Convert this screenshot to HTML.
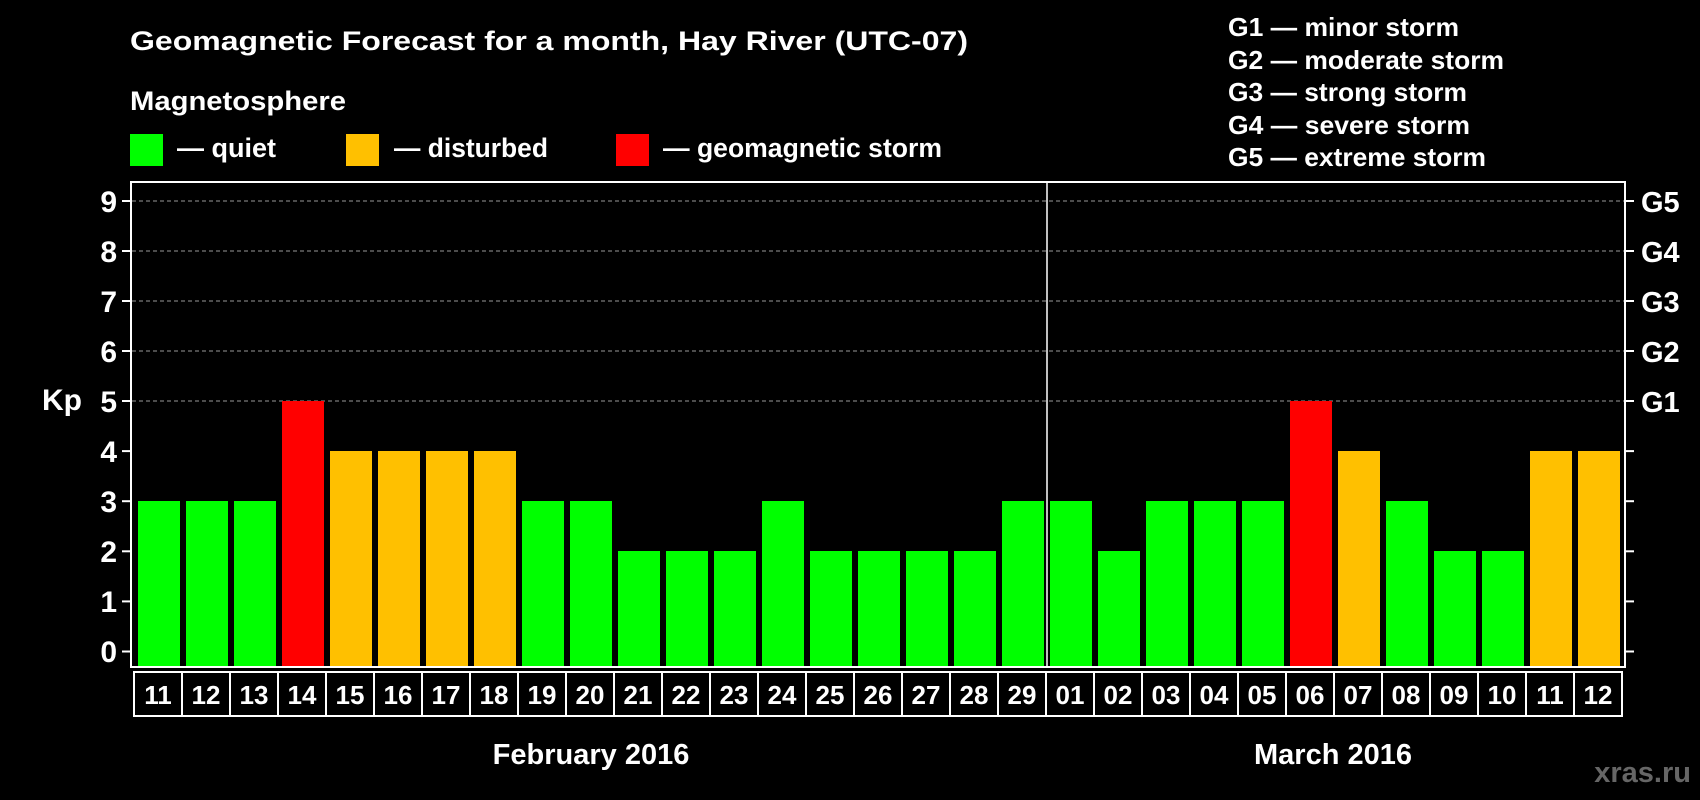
<!DOCTYPE html>
<html><head><meta charset="utf-8"><style>
html,body{margin:0;padding:0;background:#000;width:1700px;height:800px;overflow:hidden}
svg{display:block;font-family:"Liberation Sans",Arial,sans-serif;font-weight:bold}
</style></head><body>
<svg width="1700" height="800" viewBox="0 0 1700 800">
<rect width="1700" height="800" fill="#000"/>
<g fill="#fff">
<text x="130" y="50" font-size="27" textLength="838" lengthAdjust="spacingAndGlyphs">Geomagnetic Forecast for a month, Hay River (UTC-07)</text>
<text x="130" y="110" font-size="27" textLength="216" lengthAdjust="spacingAndGlyphs">Magnetosphere</text>
<text x="177" y="157" font-size="27" textLength="99" lengthAdjust="spacingAndGlyphs">— quiet</text>
<text x="394" y="157" font-size="27" textLength="154" lengthAdjust="spacingAndGlyphs">— disturbed</text>
<text x="663" y="157" font-size="27" textLength="279" lengthAdjust="spacingAndGlyphs">— geomagnetic storm</text>
<g font-size="26">
<text x="1228" y="36" textLength="231" lengthAdjust="spacingAndGlyphs">G1 — minor storm</text>
<text x="1228" y="69" textLength="276" lengthAdjust="spacingAndGlyphs">G2 — moderate storm</text>
<text x="1228" y="101" textLength="239" lengthAdjust="spacingAndGlyphs">G3 — strong storm</text>
<text x="1228" y="134" textLength="242" lengthAdjust="spacingAndGlyphs">G4 — severe storm</text>
<text x="1228" y="166" textLength="258" lengthAdjust="spacingAndGlyphs">G5 — extreme storm</text>
</g>
</g>
<rect x="130" y="134" width="33" height="32" fill="#00ff00"/>
<rect x="346" y="134" width="33" height="32" fill="#ffc000"/>
<rect x="616" y="134" width="33" height="32" fill="#ff0000"/>

<g stroke="#999" stroke-width="1" stroke-dasharray="4,3">
<line x1="132" x2="1624" y1="401" y2="401"/>
<line x1="132" x2="1624" y1="351" y2="351"/>
<line x1="132" x2="1624" y1="301" y2="301"/>
<line x1="132" x2="1624" y1="251" y2="251"/>
<line x1="132" x2="1624" y1="201" y2="201"/>
</g>

<g fill="#00ff00">
<rect x="138" y="501" width="42" height="166"/>
<rect x="186" y="501" width="42" height="166"/>
<rect x="234" y="501" width="42" height="166"/>
<rect x="522" y="501" width="42" height="166"/>
<rect x="570" y="501" width="42" height="166"/>
<rect x="618" y="551" width="42" height="116"/>
<rect x="666" y="551" width="42" height="116"/>
<rect x="714" y="551" width="42" height="116"/>
<rect x="762" y="501" width="42" height="166"/>
<rect x="810" y="551" width="42" height="116"/>
<rect x="858" y="551" width="42" height="116"/>
<rect x="906" y="551" width="42" height="116"/>
<rect x="954" y="551" width="42" height="116"/>
<rect x="1002" y="501" width="42" height="166"/>
<rect x="1050" y="501" width="42" height="166"/>
<rect x="1098" y="551" width="42" height="116"/>
<rect x="1146" y="501" width="42" height="166"/>
<rect x="1194" y="501" width="42" height="166"/>
<rect x="1242" y="501" width="42" height="166"/>
<rect x="1386" y="501" width="42" height="166"/>
<rect x="1434" y="551" width="42" height="116"/>
<rect x="1482" y="551" width="42" height="116"/>
</g>
<g fill="#ffc000">
<rect x="330" y="451" width="42" height="216"/>
<rect x="378" y="451" width="42" height="216"/>
<rect x="426" y="451" width="42" height="216"/>
<rect x="474" y="451" width="42" height="216"/>
<rect x="1338" y="451" width="42" height="216"/>
<rect x="1530" y="451" width="42" height="216"/>
<rect x="1578" y="451" width="42" height="216"/>
</g>
<g fill="#ff0000">
<rect x="282" y="401" width="42" height="266"/>
<rect x="1290" y="401" width="42" height="266"/>
</g>

<rect x="131" y="182" width="1494" height="485" fill="none" stroke="#fff" stroke-width="2"/>
<line x1="1047" x2="1047" y1="182" y2="667" stroke="#fff" stroke-width="1.5"/>
<g stroke="#fff" stroke-width="2">
<line x1="122" x2="131" y1="651.5" y2="651.5"/><line x1="122" x2="131" y1="601.4" y2="601.4"/>
<line x1="122" x2="131" y1="551.3" y2="551.3"/><line x1="122" x2="131" y1="501.2" y2="501.2"/>
<line x1="122" x2="131" y1="451.1" y2="451.1"/><line x1="122" x2="131" y1="401" y2="401"/>
<line x1="122" x2="131" y1="351" y2="351"/><line x1="122" x2="131" y1="301" y2="301"/>
<line x1="122" x2="131" y1="251" y2="251"/><line x1="122" x2="131" y1="201" y2="201"/>
<line x1="1625" x2="1634" y1="651.5" y2="651.5"/><line x1="1625" x2="1634" y1="601.4" y2="601.4"/>
<line x1="1625" x2="1634" y1="551.3" y2="551.3"/><line x1="1625" x2="1634" y1="501.2" y2="501.2"/>
<line x1="1625" x2="1634" y1="451.1" y2="451.1"/><line x1="1625" x2="1634" y1="401" y2="401"/>
<line x1="1625" x2="1634" y1="351" y2="351"/><line x1="1625" x2="1634" y1="301" y2="301"/>
<line x1="1625" x2="1634" y1="251" y2="251"/><line x1="1625" x2="1634" y1="201" y2="201"/>
</g>
<g fill="#fff" font-size="30" text-anchor="end">
<text x="117" y="662">0</text><text x="117" y="612">1</text><text x="117" y="562">2</text>
<text x="117" y="512">3</text><text x="117" y="462">4</text><text x="117" y="412">5</text>
<text x="117" y="362">6</text><text x="117" y="312">7</text><text x="117" y="262">8</text>
<text x="117" y="212">9</text>
</g>
<text x="42" y="410" fill="#fff" font-size="30">Kp</text>
<g fill="#fff" font-size="29">
<text x="1641" y="412">G1</text><text x="1641" y="362">G2</text><text x="1641" y="312">G3</text>
<text x="1641" y="262">G4</text><text x="1641" y="212">G5</text>
</g>

<g fill="none" stroke="#fff" stroke-width="2">
<rect x="134" y="672" width="1488" height="44"/>
<path d="M182 672V716M230 672V716M278 672V716M326 672V716M374 672V716M422 672V716M470 672V716M518 672V716M566 672V716M614 672V716M662 672V716M710 672V716M758 672V716M806 672V716M854 672V716M902 672V716M950 672V716M998 672V716M1046 672V716M1094 672V716M1142 672V716M1190 672V716M1238 672V716M1286 672V716M1334 672V716M1382 672V716M1430 672V716M1478 672V716M1526 672V716M1574 672V716"/>
</g>
<g fill="#fff" font-size="26" text-anchor="middle">
<text x="158" y="704">11</text><text x="206" y="704">12</text><text x="254" y="704">13</text><text x="302" y="704">14</text>
<text x="350" y="704">15</text><text x="398" y="704">16</text><text x="446" y="704">17</text><text x="494" y="704">18</text>
<text x="542" y="704">19</text><text x="590" y="704">20</text><text x="638" y="704">21</text><text x="686" y="704">22</text>
<text x="734" y="704">23</text><text x="782" y="704">24</text><text x="830" y="704">25</text><text x="878" y="704">26</text>
<text x="926" y="704">27</text><text x="974" y="704">28</text><text x="1022" y="704">29</text><text x="1070" y="704">01</text>
<text x="1118" y="704">02</text><text x="1166" y="704">03</text><text x="1214" y="704">04</text><text x="1262" y="704">05</text>
<text x="1310" y="704">06</text><text x="1358" y="704">07</text><text x="1406" y="704">08</text><text x="1454" y="704">09</text>
<text x="1502" y="704">10</text><text x="1550" y="704">11</text><text x="1598" y="704">12</text>
<text x="591" y="764" font-size="29">February 2016</text>
<text x="1333" y="764" font-size="29">March 2016</text>
</g>
<text x="1691" y="782" fill="#666" font-size="29" text-anchor="end">xras.ru</text>
</svg>
</body></html>
